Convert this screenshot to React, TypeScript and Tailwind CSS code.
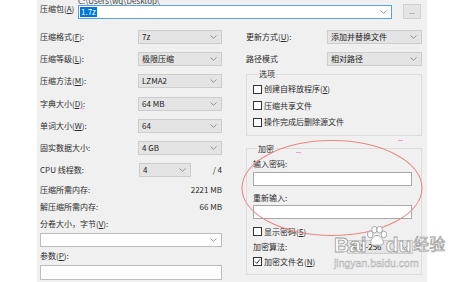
import type { ReactNode } from 'react'

const FONT = "font-['Noto_Sans_CJK_SC','Noto_Sans',sans-serif]"

function Chevron() {
  return (
    <svg width="7" height="4" viewBox="0 0 7 4" className="shrink-0">
      <path d="M0.5 0.5 L3.5 3.3 L6.5 0.5" fill="none" stroke="#8a8a8a" strokeWidth="0.9" />
    </svg>
  )
}

function Select({ value, className = '' }: { value: string; className?: string }) {
  return (
    <div
      className={`flex h-[14px] items-center justify-between border border-[#cdcdcd] bg-[#e4e4e4] pl-[3px] pr-[4px] text-[#222] ${className}`}
    >
      <span className="leading-[12px]">{value}</span>
      <Chevron />
    </div>
  )
}

function Label({ text, k, colon = true }: { text: string; k?: string; colon?: boolean }) {
  return (
    <span className="leading-[12px] whitespace-nowrap">
      {text}
      {k && (
        <>
          (<span className="underline underline-offset-[1px]">{k}</span>)
        </>
      )}
      {colon && ':'}
    </span>
  )
}

function Checkbox({ checked = false, children }: { checked?: boolean; children: ReactNode }) {
  return (
    <div className="flex items-center gap-[2px]">
      <span className="flex h-[9px] w-[9px] items-center justify-center border border-[#333] bg-white">
        {checked && (
          <svg width="7" height="7" viewBox="0 0 7 7">
            <path d="M1 3.6 L2.8 5.4 L6 1.3" fill="none" stroke="#333" strokeWidth="1" />
          </svg>
        )}
      </span>
      <span className="leading-[12px]">{children}</span>
    </div>
  )
}

const LEFT_ROWS = [
  { text: '压缩格式', k: 'F', value: '7z' },
  { text: '压缩等级', k: 'L', value: '极限压缩' },
  { text: '压缩方法', k: 'M', value: 'LZMA2' },
  { text: '字典大小', k: 'D', value: '64 MB' },
  { text: '单词大小', k: 'W', value: '64' },
  { text: '固实数据大小', value: '4 GB' },
]

function Paw() {
  return (
    <svg width="21" height="21" viewBox="0 0 20 20" className="mx-[-1px] mb-[9px] shrink-0">
      <g fill="#fff" stroke="#a0a0a0" strokeWidth="0.9">
        <ellipse cx="4" cy="8" rx="2.6" ry="3.2" />
        <ellipse cx="8" cy="3.5" rx="2.6" ry="3.2" />
        <ellipse cx="13" cy="3.5" rx="2.6" ry="3.2" />
        <ellipse cx="17" cy="8" rx="2.6" ry="3.2" />
        <path d="M10.5 9 C7 9 5 13 4.5 15 C4 18 7 19 10.5 18 C14 19 17 18 16.5 15 C16 13 14 9 10.5 9 Z" />
      </g>
    </svg>
  )
}

export default function App() {
  return (
    <div className={`relative flex h-[282px] w-[451px] overflow-hidden bg-white text-[8px] text-[#2b2b2b] ${FONT}`}>
      <div className="ml-[37px] flex h-full w-[390px] flex-col bg-[#f0f0f0]">
        {/* archive path row */}
        <div className="flex h-[26px] items-start">
          <div className="w-[41px] pl-[3px] pt-[3px]">
            <Label text="压缩包" k="A" colon={false} />
          </div>
          <div className="-mt-[4px] flex w-[314px] flex-col">
            <span className="h-[9px] leading-[9px] text-[#444]">C:\Users\wq\Desktop\</span>
            <div className="flex h-[14px] items-center justify-between border border-[#5aa0dc] bg-white pl-[1px] pr-[4px]">
              <span className="bg-[#0078d7] px-[1px] leading-[10px] text-white">1.7z</span>
              <Chevron />
            </div>
          </div>
          <div className="ml-[11px] mt-[4px] flex h-[15px] w-[18px] items-center justify-center border border-[#cfcfcf] bg-[#e4e4e4] text-[7px] leading-none text-[#777]">
            ...
          </div>
        </div>

        <div className="flex">
          {/* left column */}
          <div className="ml-[3px] flex w-[182px] flex-col">
            {LEFT_ROWS.map((r) => (
              <div key={r.text} className="flex h-[22.2px] items-center justify-between">
                <Label text={r.text} k={r.k} />
                <Select value={r.value} className="w-[84px]" />
              </div>
            ))}
            <div className="flex h-[22.2px] items-center">
              <span className="w-[99px] leading-[12px]">CPU 线程数:</span>
              <Select value="4" className="w-[52px]" />
              <span className="ml-auto leading-[12px]">/ 4</span>
            </div>
            <div className="flex h-[17px] items-center justify-between">
              <Label text="压缩所需内存" />
              <span>2221 MB</span>
            </div>
            <div className="flex h-[17px] items-center justify-between">
              <Label text="解压缩所需内存" />
              <span>66 MB</span>
            </div>
            <div className="flex h-[17px] items-center">
              <span className="leading-[12px]">
                分卷大小，字节(<span className="underline underline-offset-[1px]">V</span>):
              </span>
            </div>
            <div className="mt-[1px] flex h-[14px] items-center justify-end border border-[#bdbdbd] bg-white pr-[4px]">
              <Chevron />
            </div>
            <div className="flex h-[18px] items-center">
              <Label text="参数" k="P" />
            </div>
            <div className="h-[15px] border border-[#bdbdbd] bg-white" />
          </div>

          {/* right column */}
          <div className="ml-[24px] flex w-[176px] flex-col">
            <div className="flex h-[22px] items-center justify-between">
              <Label text="更新方式" k="U" />
              <Select value="添加并替换文件" className="w-[95px]" />
            </div>
            <div className="flex h-[22px] items-center justify-between">
              <Label text="路径模式" colon={false} />
              <Select value="相对路径" className="w-[95px]" />
            </div>

            <fieldset className="-mt-[1px] border border-[#dcdcdc] pb-[4px] pl-[6px] pt-[2px]">
              <legend className="ml-[5px] px-[1px] leading-[10px]">选项</legend>
              <div className="flex h-[16.5px] items-center">
                <Checkbox>
                  创建自释放程序(<span className="underline underline-offset-[1px]">X</span>)
                </Checkbox>
              </div>
              <div className="flex h-[16.5px] items-center">
                <Checkbox>压缩共享文件</Checkbox>
              </div>
              <div className="flex h-[16.5px] items-center">
                <Checkbox>操作完成后删除源文件</Checkbox>
              </div>
            </fieldset>

            <fieldset className="mt-[8px] border border-[#dcdcdc] pb-[5px] pl-[6px] pr-[8px] pt-[4px]">
              <legend className="ml-[4px] px-[1px] leading-[10px]">加密</legend>
              <div className="flex h-[12px] items-center">
                <Label text="输入密码" />
              </div>
              <div className="mt-[2px] h-[14px] w-[159px] border border-[#a8a8a8] bg-white" />
              <div className="mt-[6px] flex h-[12px] items-center">
                <Label text="重新输入" />
              </div>
              <div className="mt-[1px] h-[14px] w-[159px] border border-[#a8a8a8] bg-white" />
              <div className="mt-[6px] flex h-[14px] items-center">
                <Checkbox>
                  显示密码(<span className="underline underline-offset-[1px]">S</span>)
                </Checkbox>
              </div>
              <div className="flex h-[16px] items-center">
                <span className="w-[94px] leading-[12px]">加密算法:</span>
                <Select value="AES-256" className="w-[66px]" />
              </div>
              <div className="flex h-[14px] items-center">
                <Checkbox checked>
                  加密文件名(<span className="underline underline-offset-[1px]">N</span>)
                </Checkbox>
              </div>
            </fieldset>
          </div>
        </div>
      </div>

      {/* red annotation ellipse and stray marks */}
      <svg className="pointer-events-none absolute left-0 top-0" width="451" height="282">
        <ellipse cx="332" cy="188" rx="90" ry="47.5" fill="none" stroke="#ea8585" strokeWidth="1.1" />
        <line x1="79" y1="108.5" x2="84" y2="108.5" stroke="#f0a0e0" strokeWidth="1" />
        <line x1="398" y1="140.5" x2="403" y2="140.5" stroke="#f0a0e0" strokeWidth="1" />
        <line x1="296" y1="152.5" x2="301" y2="152.5" stroke="#f0a0e0" strokeWidth="1" />
      </svg>

      {/* watermark */}
      <div className="pointer-events-none absolute left-[334px] top-[226px] flex w-[110px] flex-col whitespace-nowrap font-['Liberation_Sans','Noto_Sans_CJK_SC',sans-serif] text-white">
        <div className="flex items-end text-[21px] font-bold leading-[22px] [-webkit-text-stroke:0.8px_#9c9c9c]">
          <span className="shrink-0">Bai</span>
          <Paw />
          <span className="shrink-0">du</span>
          <span className="ml-[2px] shrink-0 text-[16px] font-normal [-webkit-text-stroke:0.7px_#9c9c9c]">经验</span>
        </div>
        <span className="mt-[2px] text-[10.5px] leading-[11px] [-webkit-text-stroke:0.5px_#b0b0b0]">jingyan.baidu.com</span>
      </div>
    </div>
  )
}
